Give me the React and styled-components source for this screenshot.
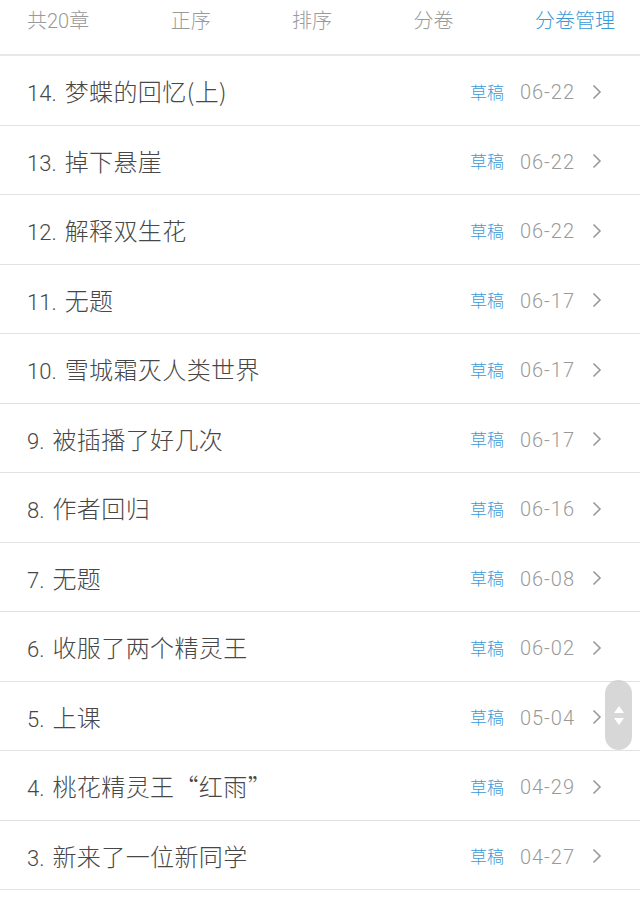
import React from "react";
import styled, { createGlobalStyle } from "styled-components";

const Global = createGlobalStyle`
  html, body { margin: 0; padding: 0; background: #fff; }
  body { font-family: "Noto Sans CJK SC", sans-serif; -webkit-font-smoothing: antialiased; }
`;

const Page = styled.div`
  position: relative;
  width: 640px;
  height: 899px;
  overflow: hidden;
  background: #fff;
`;

const Toolbar = styled.div`
  display: flex;
  justify-content: space-between;
  align-items: flex-start;
  height: 56px;
  padding: 7px 25px 0 27px;
  box-sizing: border-box;
  border-bottom: 2px solid #e8e8e8;
`;

const Tab = styled.span`
  font-family: Roboto, "Noto Sans CJK SC", sans-serif;
  font-size: 20px;
  line-height: 28px;
  font-weight: 300;
  color: ${(p) => (p.$active ? "#3a9ad9" : "#9a9a9a")};
`;

const List = styled.div`
  display: flex;
  flex-direction: column;
`;

const Row = styled.div`
  display: flex;
  align-items: center;
  height: 68.5px;
  padding: 0 38px 0 27px;
  border-bottom: 1px solid #e2e2e2;
`;

const Title = styled.div`
  flex: 1;
  display: flex;
  align-items: baseline;
  color: #474747;
  white-space: nowrap;
  margin-top: 1px;
`;

const Num = styled.span`
  font-family: Roboto, sans-serif;
  font-size: 22px;
  font-weight: 300;
  margin-right: 8px;
`;

const Name = styled.span`
  font-family: "Noto Sans CJK SC", sans-serif;
  font-size: 24px;
  font-weight: 300;
  letter-spacing: 0.4px;
`;

const Meta = styled.div`
  display: flex;
  align-items: center;
`;

const Status = styled.span`
  font-size: 17px;
  font-weight: 300;
  color: #3a9ad9;
  margin-right: 16px;
  margin-top: 2px;
`;

const DateText = styled.span`
  font-family: Roboto, sans-serif;
  font-size: 20px;
  font-weight: 300;
  letter-spacing: 1px;
  color: #9a9a9a;
  margin-right: 17px;
  margin-top: 4px;
`;

const ChevronIcon = styled.svg`
  display: block;
  margin-top: 3px;
`;

const Chevron = () => (
  <ChevronIcon width="10" height="16" viewBox="0 0 10 16">
    <path d="M1.5 1.5 L8 8 L1.5 14.5" fill="none" stroke="#999" strokeWidth="1.6" />
  </ChevronIcon>
);

const ScrollThumb = styled.div`
  position: absolute;
  left: 605px;
  top: 680px;
  width: 27px;
  height: 70px;
  border-radius: 14px;
  background: rgba(205, 205, 205, 0.8);
  display: flex;
  flex-direction: column;
  align-items: center;
  justify-content: center;
  gap: 5px;
`;

const chapters = [
  ["14.", "梦蝶的回忆(上)", "06-22"],
  ["13.", "掉下悬崖", "06-22"],
  ["12.", "解释双生花", "06-22"],
  ["11.", "无题", "06-17"],
  ["10.", "雪城霜灭人类世界", "06-17"],
  ["9.", "被插播了好几次", "06-17"],
  ["8.", "作者回归", "06-16"],
  ["7.", "无题", "06-08"],
  ["6.", "收服了两个精灵王", "06-02"],
  ["5.", "上课", "05-04"],
  ["4.", "桃花精灵王“红雨”", "04-29"],
  ["3.", "新来了一位新同学", "04-27"],
];

export default function App() {
  return (
    <Page>
      <Global />
      <Toolbar>
        <Tab>共20章</Tab>
        <Tab>正序</Tab>
        <Tab>排序</Tab>
        <Tab>分卷</Tab>
        <Tab $active>分卷管理</Tab>
      </Toolbar>
      <List>
        {chapters.map(([n, t, d]) => (
          <Row key={n}>
            <Title>
              <Num>{n}</Num>
              <Name>{t}</Name>
            </Title>
            <Meta>
              <Status>草稿</Status>
              <DateText>{d}</DateText>
              <Chevron />
            </Meta>
          </Row>
        ))}
      </List>
      <ScrollThumb>
        <svg width="10" height="7" viewBox="0 0 10 7"><path d="M5 0 L10 7 L0 7 Z" fill="#fff" /></svg>
        <svg width="10" height="7" viewBox="0 0 10 7"><path d="M0 0 L10 0 L5 7 Z" fill="#fff" /></svg>
      </ScrollThumb>
    </Page>
  );
}
